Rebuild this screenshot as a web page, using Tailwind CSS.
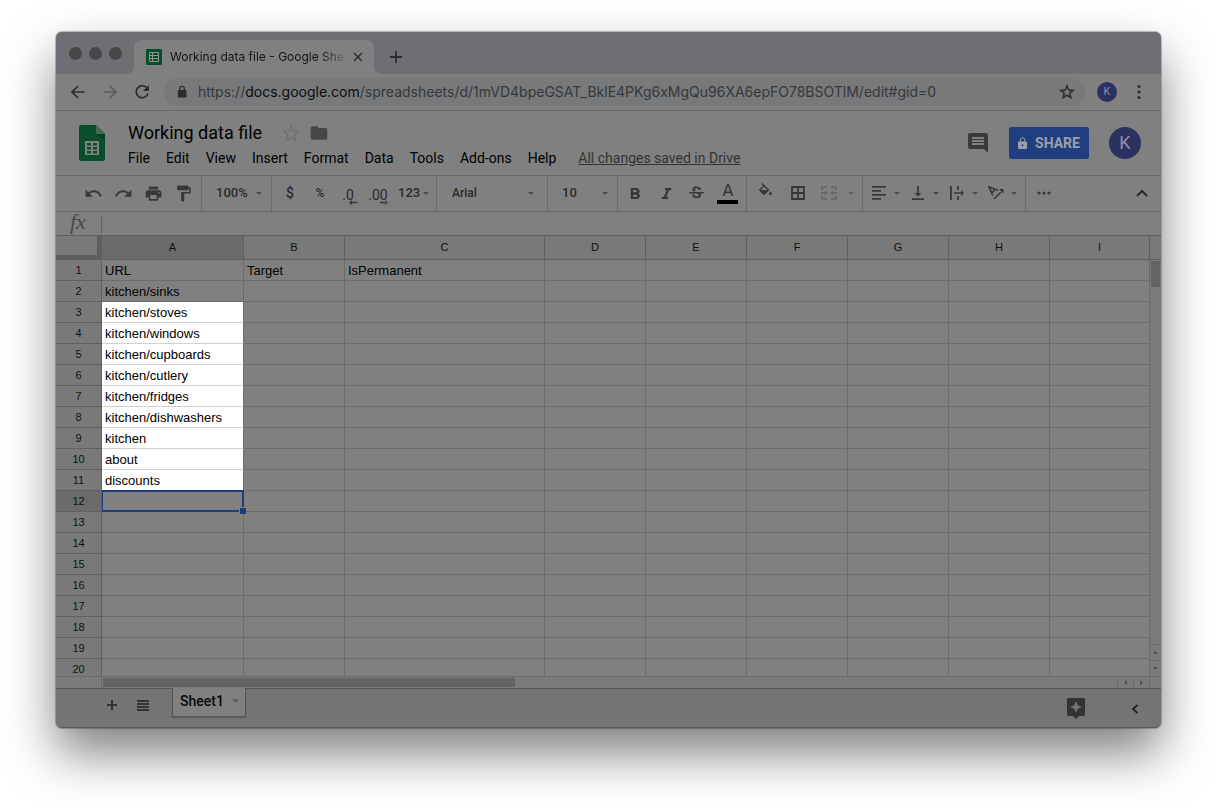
<!DOCTYPE html>
<html lang="en">
<head>
<meta charset="utf-8">
<title>Working data file - Google Sheets</title>
<script src="https://cdn.jsdelivr.net/npm/@tailwindcss/browser@4"></script>
</head>
<body class="bg-white font-[Roboto,sans-serif] text-black">
<svg class="hidden">
  <symbol id="caret" viewBox="0 0 6 3"><path d="M0 0h6L3 3z"/></symbol>
</svg>
<div class="pt-8 pb-[79px] px-14 overflow-hidden">
<main class="rounded-md overflow-hidden bg-[#808080] shadow-[0_0_1px_1px_rgba(0,0,0,0.25),0_25px_50px_rgba(0,0,0,0.5)]">

  <!-- Tab strip -->
  <div class="h-[42px] bg-[#6d6f74] flex items-end">
    <div class="flex gap-[7px] pl-[13px] pb-[14px] w-[78px] shrink-0">
      <span class="size-[13px] shrink-0 rounded-full bg-[#474747]"></span>
      <span class="size-[13px] shrink-0 rounded-full bg-[#474747]"></span>
      <span class="size-[13px] shrink-0 rounded-full bg-[#474747]"></span>
    </div>
    <div class="relative w-60 h-[34px] shrink-0 rounded-t-lg bg-[#808080] flex items-center px-3 before:absolute before:bottom-0 before:-left-2 before:size-2 before:bg-[radial-gradient(circle_at_0_0,transparent_8px,#808080_8px)] after:absolute after:bottom-0 after:-right-2 after:size-2 after:bg-[radial-gradient(circle_at_100%_0,transparent_8px,#808080_8px)]">
      <svg class="size-4 shrink-0" viewBox="0 0 16 16"><rect width="16" height="16" rx="1" fill="#084e2b"/><path d="M3.5 3.5h9v9h-9zM3.5 6.5h9M3.5 9.5h9M6.5 3.5v9" fill="none" stroke="#8b9890"/></svg>
      <span class="ml-2 w-[178px] shrink-0 whitespace-nowrap font-[Inter,sans-serif] text-xs text-[#141415] [mask-image:linear-gradient(to_right,#000_150px,transparent_180px)]">Working data file - Google She</span>
      <button aria-label="Close tab" class="ml-1 size-3 flex items-center justify-center shrink-0"><svg class="size-[10px]" viewBox="0 0 10 10"><path d="M1 1l8 8M9 1l-8 8" stroke="#2c2d2f" stroke-width="1.5"/></svg></button>
    </div>
    <button aria-label="New tab" class="ml-[15px] mb-[10px] size-[14px]"><svg class="size-[14px]" viewBox="0 0 14 14"><path d="M7 1v12M1 7h12" stroke="#2c2d2f" stroke-width="1.8"/></svg></button>
  </div>

  <!-- Address bar -->
  <div class="h-[37px] border-b border-[#6a6a6a] flex items-center pl-3 pr-[14px]">
    <button aria-label="Back" class="size-5 mr-3"><svg viewBox="0 0 20 20" class="size-5"><path d="M16.500 10H4.500M10 4l-6 6 6 6" fill="none" stroke="#2b2c2d" stroke-width="1.7"/></svg></button>
    <button aria-label="Forward" class="size-5 mr-3"><svg viewBox="0 0 20 20" class="size-5"><path d="M3.500 10h12M10 4l6 6-6 6" fill="none" stroke="#595a5b" stroke-width="1.600"/></svg></button>
    <button aria-label="Reload" class="size-5 mr-3"><svg viewBox="0 0 20 20" class="size-5"><path d="M15.200 6.300A6 6 0 1 0 16 11.500" fill="none" stroke="#2b2c2d" stroke-width="1.700"/><path d="M17 3v6h-6z" fill="#2b2c2d"/></svg></button>
    <div class="h-7 flex-1 rounded-full bg-[#78797b] flex items-center pl-3 pr-[9px] min-w-0">
      <svg class="w-3 h-4 shrink-0" viewBox="0 0 12 16"><rect x="1.800" y="6" width="8.600" height="7.600" rx="1" fill="#2b2c2d"/><path d="M3.800 6.500V4.600a2.300 2.300 0 0 1 4.600 0v1.900" fill="none" stroke="#2b2c2d" stroke-width="1.300"/></svg>
      <span class="ml-[10px] flex-1 whitespace-nowrap overflow-hidden font-[Inter,sans-serif] text-sm text-[#36383a]">https://<span class="text-[#0c0c0d]">docs.google.com</span>/spreadsheets/d/1mVD4bpeGSAT_BklE4PKg6xMgQu96XA6epFO78BSOTlM/edit#gid=0</span>
      <button aria-label="Bookmark" class="size-[18px] shrink-0"><svg class="size-[18px]" viewBox="0 0 24 24" fill="#2b2c2d"><path d="M22 9.240l-7.190-.620L12 2 9.190 8.630 2 9.240l5.460 4.730L5.820 21 12 17.270 18.180 21l-1.630-7.030L22 9.240zM12 15.400l-3.760 2.270 1-4.280-3.320-2.880 4.380-.380L12 6.100l1.710 4.040 4.380.380-3.320 2.880 1 4.280L12 15.400z" stroke="#2b2c2d" stroke-width=".5"/></svg></button>
    </div>
    <button class="ml-3 size-5 rounded-full bg-[#2b3160] text-[#8d90a8] text-[11px] leading-5 shrink-0">K</button>
    <button aria-label="Browser menu" class="ml-[14px] size-4 shrink-0"><svg class="size-4" viewBox="0 0 16 16" fill="#2b2c2d"><circle cx="8" cy="2.500" r="1.600"/><circle cx="8" cy="8" r="1.600"/><circle cx="8" cy="13.500" r="1.600"/></svg></button>
  </div>

  <!-- Document header -->
  <header class="h-[65px] border-b border-[#6b6b6b] flex items-center pl-[23px] pr-5">
    <svg class="w-[26px] h-9 shrink-0" viewBox="0 0 26 36"><path d="M2 0h15l9 9v25a2 2 0 0 1-2 2H2a2 2 0 0 1-2-2V2a2 2 0 0 1 2-2z" fill="#094f2d"/><path d="M17 0l9 9h-9z" fill="#446956"/><path d="M17 9h9v7z" fill="#06401f"/><path d="M6 16h14v14H6z" fill="#808080"/><path d="M8 18h4v2.500H8zM14 18h4v2.500h-4zM8 22h4v2.500H8zM14 22h4v2.500h-4zM8 26h4v2.500H8zM14 26h4v2.500h-4z" fill="#094f2d"/></svg>
    <div class="ml-[23px] flex-1 pt-[5px]">
      <div class="flex items-center h-6">
        <h1 class="text-lg leading-6">Working data file</h1>
        <button aria-label="Star" class="ml-5 size-[18px]"><svg class="size-[18px]" viewBox="0 0 24 24" fill="#686868"><path d="M23 9.200l-8-.600L12 1 9 8.600l-8 .6 6 5.200L5.200 22.500 12 18.200l6.800 4.300L17 14.400zM12 17l-5.200 3.200 1.400-6.200-4.700-4 6.200-.500L12 3.700l2.300 5.800 6.200.500-4.700 4 1.400 6.200z"/></svg></button>
        <button aria-label="Move to folder" class="ml-[9px] size-5"><svg class="size-5" viewBox="0 0 24 24" fill="#474747"><path d="M10 4H4a2 2 0 0 0-2 2v12a2 2 0 0 0 2 2h16a2 2 0 0 0 2-2V8a2 2 0 0 0-2-2h-8z"/></svg></button>
      </div>
      <nav class="flex items-center gap-4 h-[26px] text-sm whitespace-nowrap">
        <button>File</button><button>Edit</button><button>View</button><button>Insert</button><button>Format</button><button>Data</button><button>Tools</button><button>Add-ons</button><button>Help</button>
        <a href="#" class="ml-1.5 underline text-[#333333]">All changes saved in Drive</a>
      </nav>
    </div>
    <button aria-label="Comments" class="size-6"><svg class="size-6" viewBox="0 0 24 24" fill="#3a3a3a"><path d="M21.990 4c0-1.100-.890-2-1.990-2H4c-1.100 0-2 .9-2 2v12c0 1.100.9 2 2 2h14l4 4-.010-18zM18 14H6v-2h12v2zm0-3H6V9h12v2zm0-3H6V6h12v2z"/></svg></button>
    <button class="ml-[19px] w-20 h-8 rounded-xs bg-[#213f80] text-[#9a9fa9] text-sm font-bold flex items-center justify-center gap-2"><svg class="w-[9px] h-3" viewBox="0 0 9 12"><path d="M1 4.500h7a1 1 0 0 1 1 1V11a1 1 0 0 1-1 1H1a1 1 0 0 1-1-1V5.500a1 1 0 0 1 1-1z" fill="#9a9fa9"/><path d="M2.300 5V3a2.200 2.200 0 0 1 4.400 0v2" fill="none" stroke="#9a9fa9"/><circle cx="4.500" cy="8.200" r="1" fill="#213f80"/></svg>SHARE</button>
    <button class="ml-5 size-8 rounded-full bg-[#2b3160] text-[#8d90a8] text-lg">K</button>
  </header>

  <!-- Toolbar -->
  <div class="h-9 border-b border-[#6a6a6a] flex items-stretch text-[13px] font-medium text-[#2a2a2a] fill-[#383838] *:shrink-0 *:border-[#6a6a6a] *:flex *:items-center *:pb-px">
    <div class="w-[146px] border-r pl-[22px]">
      <button aria-label="Undo" class="w-[30px] flex justify-center"><svg class="size-[19px]" viewBox="0 0 24 24"><path d="M12.500 8c-2.650 0-5.050.990-6.900 2.600L2 7v9h9l-3.620-3.620c1.390-1.160 3.160-1.880 5.120-1.880 3.540 0 6.550 2.310 7.600 5.500l2.370-.780C21.080 11.030 17.150 8 12.500 8z"/></svg></button>
      <button aria-label="Redo" class="w-[30px] flex justify-center"><svg class="size-[19px]" viewBox="0 0 24 24"><path d="M18.400 10.600C16.550 8.990 14.150 8 11.500 8c-4.650 0-8.580 3.030-9.960 7.220L3.900 16c1.050-3.190 4.050-5.500 7.600-5.500 1.950 0 3.730.720 5.120 1.880L13 16h9V7l-3.600 3.600z"/></svg></button>
      <button aria-label="Print" class="w-[30px] flex justify-center"><svg class="size-[19px]" viewBox="0 0 24 24"><path d="M19 8H5c-1.660 0-3 1.340-3 3v6h4v4h12v-4h4v-6c0-1.660-1.340-3-3-3zm-3 11H8v-5h8v5zm3-7c-.550 0-1-.450-1-1s.450-1 1-1 1 .450 1 1-.450 1-1 1zm-1-9H6v4h12V3z"/></svg></button>
      <button aria-label="Paint format" class="w-[30px] flex justify-center"><svg class="size-[19px]" viewBox="0 0 24 24"><path d="M18 4V3c0-.550-.450-1-1-1H5c-.550 0-1 .450-1 1v4c0 .550.450 1 1 1h12c.550 0 1-.450 1-1V6h1v4H9v11c0 .550.450 1 1 1h2c.550 0 1-.450 1-1v-9h8V4h-3z"/></svg></button>
    </div>
    <div class="w-[70px] border-r pl-[14px]">
      <select aria-label="Zoom" class="appearance-none w-10 shrink-0"><option>100%</option></select>
      <svg class="w-1.5 h-[3px] fill-[#4a4a4a]"><use href="#caret"/></svg>
    </div>
    <div class="w-[165px] border-r pl-[3px]">
      <button class="w-[30px] text-sm">$</button>
      <button class="w-[30px] text-xs">%</button>
      <button class="w-[26px] flex flex-col items-center text-sm leading-4 pt-[5px] font-normal">.0<svg class="w-2 h-[5px] ml-2.5 -mt-[3px]" viewBox="0 0 8 5"><path d="M3 0v5L0 2.500zM2 1.700h6v1.600H2z"/></svg></button>
      <button class="w-[34px] flex flex-col items-center text-sm leading-4 pt-[5px] font-normal">.00<svg class="w-2 h-[5px] ml-3 -mt-[3px]" viewBox="0 0 8 5"><path d="M5 0v5l3-2.500zM0 1.700h6v1.600H0z"/></svg></button>
      <button class="ml-[3px] flex items-center gap-[3px]">123<svg class="w-1.5 h-[3px] fill-[#4a4a4a]"><use href="#caret"/></svg></button>
    </div>
    <div class="w-[111px] border-r pl-[15px]">
      <select aria-label="Font" class="appearance-none w-[76px] shrink-0 text-xs"><option>Arial</option></select>
      <svg class="w-1.5 h-[3px] fill-[#4a4a4a]"><use href="#caret"/></svg>
    </div>
    <div class="w-[70px] border-r pl-[14px]">
      <select aria-label="Font size" class="appearance-none w-10 shrink-0"><option>10</option></select>
      <svg class="w-1.5 h-[3px] fill-[#4a4a4a]"><use href="#caret"/></svg>
    </div>
    <div class="w-[129px] border-r pl-0.5">
      <button aria-label="Bold" class="w-[31px] flex justify-center"><svg class="size-[19px]" viewBox="0 0 24 24"><path d="M15.600 11.800c1-.700 1.600-1.800 1.600-2.800 0-2.300-1.800-4-4-4H6v14h7.800c2.100 0 3.700-1.700 3.700-3.800 0-1.500-.800-2.800-1.900-3.400zM9 7.500h3c.8 0 1.500.7 1.500 1.500s-.7 1.500-1.500 1.500H9zm3.500 9H9v-3h3.500c.8 0 1.500.7 1.500 1.500s-.7 1.500-1.500 1.500z"/></svg></button>
      <button aria-label="Italic" class="w-[30px] flex justify-center"><svg class="size-[19px]" viewBox="0 0 24 24"><path d="M10 5v3h2.200l-3.400 8H6v3h8v-3h-2.200l3.400-8H18V5z"/></svg></button>
      <button aria-label="Strikethrough" class="w-[31px] flex justify-center"><svg class="size-[19px]" viewBox="0 0 24 24"><path d="M7.240 8.750c-.260-.480-.390-1.030-.390-1.670 0-.610.130-1.160.4-1.670.260-.5.630-.930 1.110-1.290.480-.350 1.050-.630 1.700-.830.660-.190 1.390-.290 2.180-.290.810 0 1.540.110 2.210.340.660.220 1.230.540 1.690.940.470.4.830.880 1.080 1.430s.38 1.150.38 1.810h-3.010c0-.310-.05-.590-.150-.850-.090-.270-.240-.490-.440-.680-.2-.190-.450-.330-.750-.440-.3-.1-.660-.160-1.060-.160-.390 0-.740.040-1.030.130s-.53.210-.72.360c-.190.160-.34.340-.44.550-.1.210-.15.430-.15.660 0 .480.250.880.740 1.210.38.250.77.480 1.410.700H7.390c-.050-.080-.110-.170-.150-.250zM21 12v-2H3v2h9.620c.180.070.4.140.55.200.370.170.660.340.870.510s.35.360.430.570c.070.200.110.430.110.690 0 .230-.05.450-.14.660-.09.200-.23.380-.42.530-.19.150-.42.260-.71.350-.29.080-.63.130-1.010.130-.43 0-.83-.04-1.180-.130s-.66-.23-.91-.42c-.25-.19-.45-.44-.59-.75s-.25-.76-.25-1.210H6.400c0 .550.080 1.130.24 1.580s.37.850.65 1.210c.28.350.6.660.98.920.37.260.78.480 1.220.65.440.17.900.3 1.380.39.48.080.96.130 1.440.130.8 0 1.530-.09 2.180-.28s1.210-.45 1.670-.79c.46-.34.820-.77 1.070-1.270s.38-1.070.38-1.710c0-.6-.1-1.140-.31-1.610-.05-.11-.11-.23-.17-.33H21z"/></svg></button>
      <button aria-label="Text color" class="w-[31px] flex flex-col items-center gap-px"><svg class="w-[14px] h-[14px]" viewBox="0 0 14 14"><path d="M6 1L1.500 13h1.900l1-2.800h5.200l1 2.800h1.900L8 1zM5 8.600l2-5.600 2 5.600z"/></svg><span class="w-[21px] h-1 mt-0.5 bg-black"></span></button>
    </div>
    <div class="w-[116px] border-r pl-[3px]">
      <button aria-label="Fill color" class="w-[31px] flex justify-center pb-1"><svg class="size-[17px]" viewBox="0 0 24 24"><path d="M16.560 8.940L7.620 0 6.210 1.410l2.380 2.380-5.150 5.150c-.590.590-.590 1.540 0 2.120l5.500 5.500c.290.290.680.440 1.060.440s.770-.150 1.060-.440l5.500-5.500c.590-.580.590-1.530 0-2.120zM5.210 10L10 5.210 14.790 10H5.210zM19 11.500s-2 2.170-2 3.500c0 1.100.9 2 2 2s2-.9 2-2c0-1.330-2-3.500-2-3.500z"/></svg></button>
      <button aria-label="Borders" class="w-[33px] flex justify-center"><svg class="size-[14px]" viewBox="0 0 14 14"><path d="M1 1h12v12H1zM7 1v12M1 7h12" fill="none" stroke="#363636" stroke-width="1.800"/></svg></button>
      <button aria-label="Merge cells" class="w-[30px] flex justify-center"><svg class="w-4 h-[14px]" viewBox="0 0 16 14" fill="none" stroke="#646464" stroke-width="1.600"><path d="M1 4V1h5M10 1h5v3M1 10v3h5M10 13h5v-3M0 7h5M16 7h-5"/><path d="M4 4.500v5L6.800 7zM12 4.500v5L9.200 7z" fill="#646464" stroke="none"/></svg></button>
      <svg class="w-1.5 h-[3px] ml-1 fill-[#646464]"><use href="#caret"/></svg>
    </div>
    <div class="w-[163px] border-r pl-1">
      <button aria-label="Horizontal align" class="w-[39px] flex items-center"><span class="w-6 flex justify-center"><svg class="size-[14px]" viewBox="0 0 14 14"><path d="M0 0h14v1.800H0zM0 4h9v1.800H0zM0 8h14v1.800H0zM0 12h9v1.800H0z"/></svg></span><svg class="w-1.5 h-[3px] ml-[3px] fill-[#4a4a4a]"><use href="#caret"/></svg></button>
      <button aria-label="Vertical align" class="w-[39px] flex items-center"><span class="w-6 flex justify-center"><svg class="w-3 h-[14px]" viewBox="0 0 12 14"><path d="M0 12.200h12V14H0zM5.200 0h1.600v7H9.500L6 10.500 2.500 7h2.700z"/></svg></span><svg class="w-1.5 h-[3px] ml-[3px] fill-[#4a4a4a]"><use href="#caret"/></svg></button>
      <button aria-label="Text wrapping" class="w-[39px] flex items-center"><span class="w-6 flex justify-center"><svg class="size-[14px]" viewBox="0 0 14 14"><path d="M0 0h1.800v14H0zM7 0h1.800v4H7zM7 10h1.800v4H7zM4 6.200h7V4l3 3-3 3V7.800H4z"/></svg></span><svg class="w-1.5 h-[3px] ml-[3px] fill-[#4a4a4a]"><use href="#caret"/></svg></button>
      <button aria-label="Text rotation" class="w-[39px] flex items-center"><span class="w-6 flex justify-center"><svg class="size-4" viewBox="0 0 16 16" fill="none" stroke="#363636" stroke-width="1.600"><path d="M4.800 10.500L1 2l9 3.200M4 8l3.200-3.700M6 14l7-7"/><path d="M11 4h4.500v4.500z" fill="#363636" stroke="none"/></svg></span><svg class="w-1.5 h-[3px] ml-[3px] fill-[#4a4a4a]"><use href="#caret"/></svg></button>
    </div>
    <div class="flex-1 justify-between pl-[10px] pr-3">
      <button aria-label="More" class="w-4"><svg class="w-4 h-1" viewBox="0 0 16 4"><circle cx="3" cy="2" r="1.600"/><circle cx="8" cy="2" r="1.600"/><circle cx="13" cy="2" r="1.600"/></svg></button>
      <button aria-label="Hide menus" class="w-[14px]"><svg class="w-[14px] h-2" viewBox="0 0 14 8"><path d="M2 7l5-5 5 5" fill="none" stroke="#2a2a2a" stroke-width="2"/></svg></button>
    </div>
  </div>

  <!-- Formula bar -->
  <label class="h-6 border-b border-[#5f5f5f] flex items-center">
    <span class="w-[45px] pl-[14px] pb-[3px] font-['Liberation_Serif',serif] italic text-[22px] leading-5 text-[#484848]">fx</span>
    <input aria-label="Formula" class="flex-1 h-[18px] border-l border-[#636363] pl-2 outline-none">
  </label>

  <!-- Grid -->
  <div class="h-[440px] overflow-hidden flex">
    <div class="flex-1 min-w-0">
      <table class="w-full table-fixed border-separate border-spacing-0 font-['Liberation_Sans',sans-serif] text-[13px] leading-[18px] [&_td]:border-r [&_td]:border-b [&_td]:border-[#6c6c6c] [&_td]:p-0 [&_td]:pl-[3px] [&_td]:pt-0.5 [&_td]:h-[21px] [&_th]:border-r [&_th]:border-b [&_th]:border-[#606060] [&_th]:p-0 [&_th]:text-[11px] [&_th]:font-normal [&_th]:text-[#111111] [&_tbody_th]:bg-[#797979] [&_thead_th]:pb-px">
        <colgroup><col class="w-[46px]"><col class="w-[142px]"><col class="w-[101px]"><col class="w-[200px]"><col class="w-[101px]"><col class="w-[101px]"><col class="w-[101px]"><col class="w-[101px]"><col class="w-[101px]"><col></colgroup>
        <thead><tr class="h-6 bg-[#797979]">
          <th class="p-0!"><div class="h-[23px] border-r-4 border-b-4 border-[#5e5e5e]"></div></th>
          <th class="bg-[#6b6b6b]">A</th><th>B</th><th>C</th><th>D</th><th>E</th><th>F</th><th>G</th><th>H</th><th>I</th>
        </tr></thead>
        <tbody>
          <tr><th>1</th><td>URL</td><td>Target</td><td>IsPermanent</td><td></td><td></td><td></td><td></td><td></td><td></td></tr>
          <tr><th>2</th><td>kitchen/sinks</td><td></td><td></td><td></td><td></td><td></td><td></td><td></td><td></td></tr>
          <tr><th>3</th><td class="bg-white bg-clip-padding border-b-[#d0d0d0]!">kitchen/stoves</td><td></td><td></td><td></td><td></td><td></td><td></td><td></td><td></td></tr>
          <tr><th>4</th><td class="bg-white bg-clip-padding border-b-[#d0d0d0]!">kitchen/windows</td><td></td><td></td><td></td><td></td><td></td><td></td><td></td><td></td></tr>
          <tr><th>5</th><td class="bg-white bg-clip-padding border-b-[#d0d0d0]!">kitchen/cupboards</td><td></td><td></td><td></td><td></td><td></td><td></td><td></td><td></td></tr>
          <tr><th>6</th><td class="bg-white bg-clip-padding border-b-[#d0d0d0]!">kitchen/cutlery</td><td></td><td></td><td></td><td></td><td></td><td></td><td></td><td></td></tr>
          <tr><th>7</th><td class="bg-white bg-clip-padding border-b-[#d0d0d0]!">kitchen/fridges</td><td></td><td></td><td></td><td></td><td></td><td></td><td></td><td></td></tr>
          <tr><th>8</th><td class="bg-white bg-clip-padding border-b-[#d0d0d0]!">kitchen/dishwashers</td><td></td><td></td><td></td><td></td><td></td><td></td><td></td><td></td></tr>
          <tr><th>9</th><td class="bg-white bg-clip-padding border-b-[#d0d0d0]!">kitchen</td><td></td><td></td><td></td><td></td><td></td><td></td><td></td><td></td></tr>
          <tr><th>10</th><td class="bg-white bg-clip-padding border-b-[#d0d0d0]!">about</td><td></td><td></td><td></td><td></td><td></td><td></td><td></td><td></td></tr>
          <tr><th>11</th><td class="bg-white bg-clip-padding border-b-[#d0d0d0]!">discounts</td><td></td><td></td><td></td><td></td><td></td><td></td><td></td><td></td></tr>
          <tr><th class="bg-[#6b6b6b]!">12</th><td class="relative"><span class="absolute -top-px left-0 -right-px -bottom-px border-2 border-l border-[#1d3c7c]"></span><span class="absolute -right-[3px] -bottom-[3px] size-[7px] bg-[#1d3c7c] border-t border-l border-[#808080]"></span></td><td></td><td></td><td></td><td></td><td></td><td></td><td></td><td></td></tr>
          <tr><th>13</th><td></td><td></td><td></td><td></td><td></td><td></td><td></td><td></td><td></td></tr>
          <tr><th>14</th><td></td><td></td><td></td><td></td><td></td><td></td><td></td><td></td><td></td></tr>
          <tr><th>15</th><td></td><td></td><td></td><td></td><td></td><td></td><td></td><td></td><td></td></tr>
          <tr><th>16</th><td></td><td></td><td></td><td></td><td></td><td></td><td></td><td></td><td></td></tr>
          <tr><th>17</th><td></td><td></td><td></td><td></td><td></td><td></td><td></td><td></td><td></td></tr>
          <tr><th>18</th><td></td><td></td><td></td><td></td><td></td><td></td><td></td><td></td><td></td></tr>
          <tr><th>19</th><td></td><td></td><td></td><td></td><td></td><td></td><td></td><td></td><td></td></tr>
          <tr><th>20</th><td></td><td></td><td></td><td></td><td></td><td></td><td></td><td></td><td></td></tr>
        </tbody>
      </table>
    </div>
    <div class="w-[11px] shrink-0 flex flex-col bg-[#7b7b7b] fill-[#4a4a4a]">
      <div class="h-6 border-b border-[#606060] bg-[#797979]"></div>
      <div class="w-[9px] h-[26px] mt-px ml-px bg-[#636363]"></div>
      <button aria-label="Scroll up" class="mt-auto h-4 border-t border-[#6a6a6a] flex items-center justify-center"><svg class="w-[5px] h-[3px]" viewBox="0 0 6 3"><path d="M0 3h6L3 0z"/></svg></button>
      <button aria-label="Scroll down" class="h-4 border-t border-[#6a6a6a] flex items-center justify-center"><svg class="w-[5px] h-[3px]"><use href="#caret"/></svg></button>
    </div>
  </div>
  <div class="h-[13px] border-t border-b border-t-[#6a6a6a] border-b-[#555555] flex bg-[#7b7b7b] fill-[#4a4a4a]">
    <div class="w-[46px] border-r border-[#6a6a6a]"></div>
    <div class="flex-1 flex items-center"><div class="ml-px w-[412px] h-[9px] bg-[#636363]"></div></div>
    <button aria-label="Scroll left" class="w-4 border-l border-[#6a6a6a] flex items-center justify-center"><svg class="w-[3px] h-[5px]" viewBox="0 0 3 6"><path d="M3 0v6L0 3z"/></svg></button>
    <button aria-label="Scroll right" class="w-4 border-l border-[#6a6a6a] flex items-center justify-center"><svg class="w-[3px] h-[5px]" viewBox="0 0 3 6"><path d="M0 0v6l3-3z"/></svg></button>
    <div class="w-3 border-l border-[#6a6a6a]"></div>
  </div>

  <!-- Sheet tabs -->
  <footer class="h-[39px] bg-[#747474] border-b border-[#5a5a5a] flex items-start pl-[51px] pr-[22px]">
    <button aria-label="Add sheet" class="size-[10px] mt-[11px]"><svg class="size-[10px]" viewBox="0 0 10 10"><path d="M5 0v10M0 5h10" stroke="#333333" stroke-width="2"/></svg></button>
    <button aria-label="All sheets" class="w-3 h-[11px] mt-[11px] ml-5"><svg class="w-3 h-[11px]" viewBox="0 0 12 11" fill="#333333"><path d="M0 0h12v2H0zM0 3h12v2H0zM0 6h12v2H0zM0 9h12v2H0z"/></svg></button>
    <button class="ml-[23px] -mt-px w-[74px] h-[29px] bg-[#808080] border border-t-0 border-[#555555] shadow-[0_1px_1px_#606060] pl-[7px] pb-0.5 flex items-center gap-2 text-sm font-medium text-[#0a0a0a]">Sheet1<svg class="w-[7px] h-1 fill-[#5a5a5a]" viewBox="0 0 6 3"><use href="#caret"/></svg></button>
    <button aria-label="Explore" class="ml-auto mt-[9px] w-[18px] h-[21px]"><svg class="w-[18px] h-[21px]" viewBox="0 0 18 21"><path d="M1.500 0h15A1.500 1.500 0 0 1 18 1.500v15a1.500 1.500 0 0 1-1.500 1.500H12l-3 3-3-3H1.500A1.500 1.500 0 0 1 0 16.500v-15A1.500 1.500 0 0 1 1.500 0z" fill="#333333"/><path d="M9 3l1.700 4.300L15 9l-4.300 1.700L9 15l-1.700-4.300L3 9l4.300-1.700z" fill="#747474"/></svg></button>
    <button aria-label="Show side panel" class="ml-[46px] mt-[15px] w-2 h-[10px]"><svg class="w-2 h-[10px]" viewBox="0 0 8 10"><path d="M6.500 .8L2 5l4.500 4.200" fill="none" stroke="#202020" stroke-width="1.800"/></svg></button>
  </footer>
</main>
</div>
</body>
</html>
